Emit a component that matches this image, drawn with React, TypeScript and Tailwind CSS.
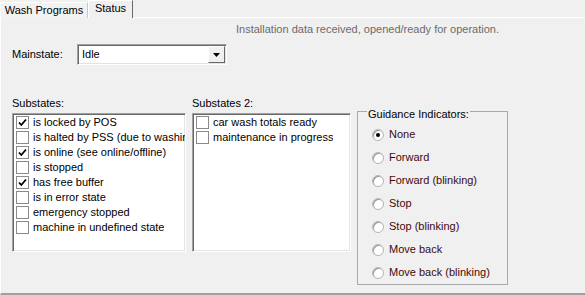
// WinForms-style "Status" tab page: main state combo, two substate check lists,
// and the guidance indicator radio group.

const substates = [
  { label: "is locked by POS", checked: true },
  { label: "is halted by PSS (due to washing program)", checked: false },
  { label: "is online (see online/offline)", checked: true },
  { label: "is stopped", checked: false },
  { label: "has free buffer", checked: true },
  { label: "is in error state", checked: false },
  { label: "emergency stopped", checked: false },
  { label: "machine in undefined state", checked: false },
];

const substates2 = [
  { label: "car wash totals ready", checked: false },
  { label: "maintenance in progress", checked: false },
];

const guidance = ["None", "Forward", "Forward (blinking)", "Stop", "Stop (blinking)", "Move back", "Move back (blinking)"];

function CheckBox({ checked }: { checked: boolean }) {
  return (
    <span className="grid h-[13px] w-[13px] shrink-0 place-items-center border border-[#8a8a8a] bg-white">
      {checked && (
        <svg width="11" height="11" viewBox="0 0 11 11" aria-hidden>
          <path d="M2 5.5 L4.3 8 L9 2.5" fill="none" stroke="#000" strokeWidth="1.8" />
        </svg>
      )}
    </span>
  );
}

function CheckList({ items, width }: { items: { label: string; checked: boolean }[]; width: string }) {
  return (
    <div
      className={`${width} h-[139px] overflow-hidden border border-t-[#a0a0a0] border-l-[#a0a0a0] border-r-white border-b-white bg-white pt-px shadow-[inset_1px_1px_0_#696969,inset_-1px_-1px_0_#e3e3e3]`}
    >
      {items.map((it) => (
        <div key={it.label} className="flex h-[15px] items-center gap-[4px] overflow-hidden whitespace-nowrap pl-[3px]">
          <CheckBox checked={it.checked} />
          <span className="overflow-hidden">{it.label}</span>
        </div>
      ))}
    </div>
  );
}

function Radio({ label, selected }: { label: string; selected: boolean }) {
  return (
    <div className="flex h-[23px] items-center gap-[5px] pl-[14px]">
      <span className="grid h-[12px] w-[12px] shrink-0 place-items-center rounded-full border border-[#b4b4b4] bg-white shadow-[inset_1px_1px_0_#9a9a9a]">
        {selected && <span className="h-[4px] w-[4px] rounded-full bg-black" />}
      </span>
      <span className="text-[#3f0a0a]">{label}</span>
    </div>
  );
}

export default function App() {
  return (
    <div className="h-[295px] w-[585px] overflow-hidden bg-[#f0f0f0] font-['Liberation_Sans',Arial,sans-serif] text-[11px] leading-[13px] text-black">
      {/* tab strip */}
      <div className="flex h-[18px] items-end">
        <div className="flex h-[16px] w-[88px] items-center justify-center border-l border-t border-r border-l-white border-t-white border-r-[#c8c8c8] bg-[#f2f2f2]">
          Wash Programs
        </div>
        <div className="flex h-[18px] w-[45px] justify-center border-t border-l border-r border-t-white border-l-white border-r-[#696969] pt-px">
          Status
        </div>
        <div className="h-px flex-1 bg-white" />
      </div>

      {/* tab page */}
      <div className="h-[277px] border-l border-b-2 border-l-white border-b-[#a0a0a0]">
        <div className="pl-[235px] pt-[5px] text-[#6b6b6b]">Installation data received, opened/ready for operation.</div>

        <div className="mt-[8px] flex h-[21px] items-center pl-[11px]">
          <span className="w-[65px]">Mainstate:</span>
          <div className="flex h-[21px] w-[150px] items-center border border-t-[#a0a0a0] border-l-[#a0a0a0] border-r-white border-b-white bg-white shadow-[inset_1px_1px_0_#696969,inset_-1px_-1px_0_#e3e3e3]">
            <span className="flex-1 pl-[4px]">Idle</span>
            <div className="mr-px grid h-[17px] w-[17px] place-items-center border border-t-white border-l-white border-r-[#696969] border-b-[#696969] bg-[#f0f0f0]">
              <svg width="7" height="4" viewBox="0 0 7 4" aria-hidden>
                <path d="M0 0 H7 L3.5 4 Z" fill="#000" />
              </svg>
            </div>
          </div>
        </div>

        <div className="mt-[32px] flex gap-[6px] pl-[11px]">
          <div>
            <div>Substates:</div>
            <div className="mt-[3px]">
              <CheckList items={substates} width="w-[174px]" />
            </div>
          </div>
          <div>
            <div>Substates 2:</div>
            <div className="mt-[3px]">
              <CheckList items={substates2} width="w-[159px]" />
            </div>
          </div>
          <div className="relative mt-[14px] h-[174px] w-[151px] border border-[#a8a8a8] pt-[11px]">
            <span className="absolute -top-[4px] left-[9px] bg-[#f0f0f0] px-px">Guidance Indicators:</span>
            {guidance.map((g, i) => (
              <Radio key={g} label={g} selected={i === 0} />
            ))}
          </div>
        </div>
      </div>
    </div>
  );
}
